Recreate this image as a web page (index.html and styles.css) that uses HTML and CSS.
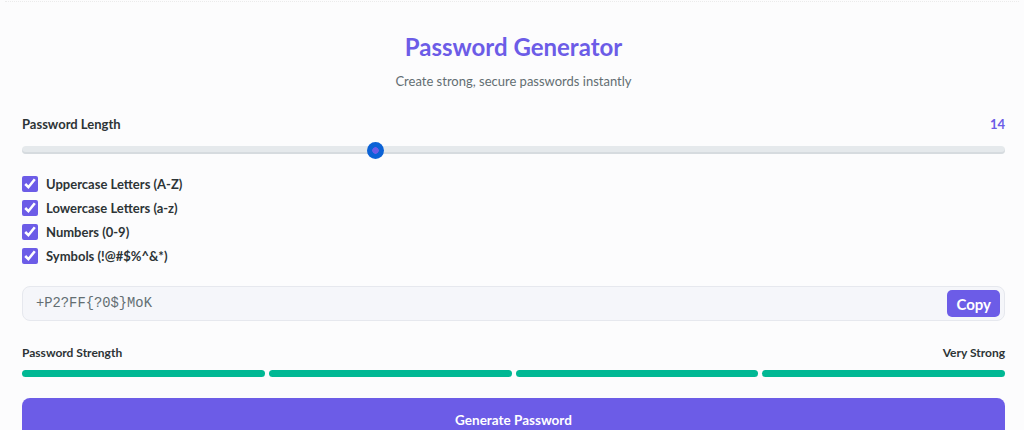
FILE: index.html
```html
<!DOCTYPE html>
<html lang="en">
<head>
<meta charset="utf-8">
<title>Password Generator</title>
<link rel="stylesheet" href="styles.css">
</head>
<body>
<div class="card">
  <header class="head">
    <h1 class="title">Password Generator</h1>
    <p class="subtitle">Create strong, secure passwords instantly</p>
  </header>

  <section class="length">
    <div class="row-between">
      <span class="label">Password Length</span>
      <span class="length-value">14</span>
    </div>
    <input class="slider" type="range" min="4" max="32" value="14">
  </section>

  <section class="options">
    <label class="option"><input type="checkbox" checked><span>Uppercase Letters (A-Z)</span></label>
    <label class="option"><input type="checkbox" checked><span>Lowercase Letters (a-z)</span></label>
    <label class="option"><input type="checkbox" checked><span>Numbers (0-9)</span></label>
    <label class="option"><input type="checkbox" checked><span>Symbols (!@#$%^&amp;*)</span></label>
  </section>

  <div class="output">
    <span class="password">+P2?FF{?0$}MoK</span>
    <button class="copy">Copy</button>
  </div>

  <section class="strength">
    <div class="row-between">
      <span class="label small">Password Strength</span>
      <span class="label small">Very Strong</span>
    </div>
    <div class="bars">
      <span class="bar"></span><span class="bar"></span><span class="bar"></span><span class="bar"></span>
    </div>
  </section>

  <button class="generate">Generate Password</button>
</div>
</body>
</html>
```

FILE: styles.css
```css
* { box-sizing: border-box; }
html, body { margin: 0; padding: 0; }
body {
  background: #fcfcfd;
  font-family: "Lato", "Noto Sans", sans-serif;
  color: #2d3436;
  overflow: hidden;
}
.card {
  margin: 1px 5px 0;
  padding: 28px 14px 0 17px;
  border-top: 1px dotted #ebebeb;
}
.head { text-align: center; }
.title {
  margin: 0;
  font-size: 24px;
  font-weight: 700;
  color: #6c5ce7;
  line-height: 34px;
}
.subtitle {
  margin: 8px 0 0;
  font-size: 13px;
  color: #636e72;
  line-height: 18px;
}
.length { margin-top: 25px; }
.row-between {
  display: flex;
  justify-content: space-between;
  align-items: center;
}
.label {
  font-size: 13px;
  font-weight: 700;
  color: #2d3436;
  line-height: 18px;
}
.label.small { font-size: 12px; }
.length-value {
  font-size: 13px;
  font-weight: 700;
  color: #6c5ce7;
  line-height: 18px;
}
.slider {
  -webkit-appearance: none;
  appearance: none;
  display: block;
  width: 100%;
  height: 8px;
  margin: 13px 0 0;
  border-radius: 4px;
  background: #e5e9ec;
  box-shadow: inset 0 -2px 0 #d6dbdf;
  outline: none;
}
.slider::-webkit-slider-thumb {
  -webkit-appearance: none;
  appearance: none;
  width: 17px;
  height: 17px;
  border-radius: 50%;
  background: radial-gradient(circle, #6c5ce7 0 3px, #0b62d6 3.5px);
  border: none;
  cursor: pointer;
}
.options {
  margin-top: 21px;
  display: flex;
  flex-direction: column;
  gap: 6px;
}
.option {
  display: flex;
  align-items: center;
  gap: 8px;
  font-size: 13px;
  font-weight: 700;
  line-height: 18px;
}
.option input {
  margin: 0;
  width: 16px;
  height: 16px;
  accent-color: #6c5ce7;
}
.output {
  margin-top: 21px;
  display: flex;
  align-items: center;
  justify-content: space-between;
  height: 35px;
  padding: 0 4px 0 13px;
  background: #f5f6fa;
  border: 1px solid #e6e8ee;
  border-radius: 8px;
}
.password {
  font-family: "Liberation Mono", monospace;
  font-size: 13.8px;
  color: #636e72;
}
.copy {
  border: none;
  background: #6c5ce7;
  color: #fff;
  font-family: inherit;
  font-size: 15px;
  font-weight: 700;
  height: 27px;
  padding: 0 9px;
  border-radius: 5px;
  cursor: pointer;
}
.strength { margin-top: 23px; }
.bars {
  margin-top: 8px;
  display: flex;
  gap: 4px;
}
.bar {
  flex: 1;
  height: 7px;
  border-radius: 4px;
  background: #00b894;
}
.generate {
  display: block;
  width: 100%;
  margin-top: 21px;
  height: 44px;
  border: none;
  border-radius: 8px;
  background: #6c5ce7;
  color: #fff;
  font-family: inherit;
  font-size: 13.5px;
  font-weight: 700;
  cursor: pointer;
}
```
